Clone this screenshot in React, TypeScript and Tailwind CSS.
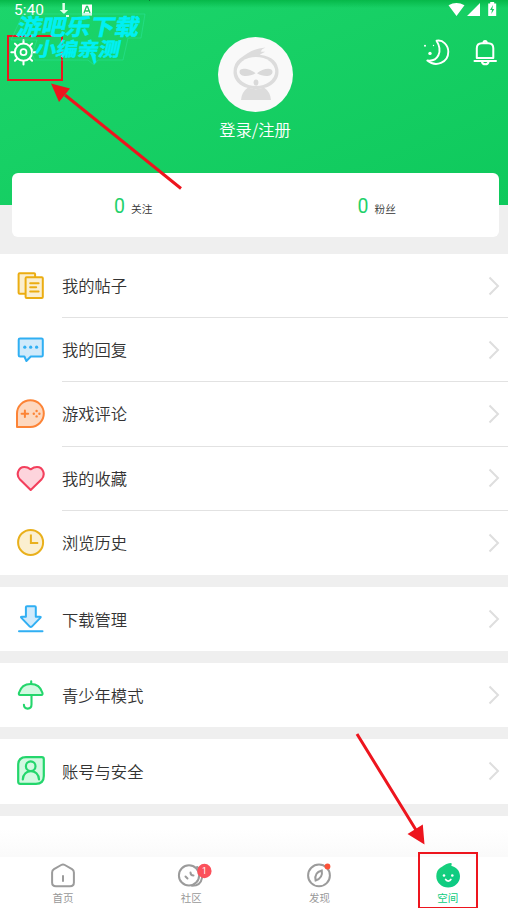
import type { ReactNode } from "react";

const Posts = () => (
  <g stroke="#ebad12" strokeWidth="2" strokeLinejoin="round" strokeLinecap="round" fill="#fbefd0">
    <rect x="2.6" y="2.2" width="16.5" height="20.6" rx="1" />
    <rect x="9.6" y="6.2" width="17.2" height="20.8" rx="1" />
    <path d="M14.2 12.2h8.4M14.2 16.3h6M14.2 20.4h8.4" />
  </g>
);
const Reply = () => (
  <g>
    <path d="M4 3.5h21.5q1.3 0 1.3 1.3v15.4q0 1.3-1.3 1.3H14.8L10.4 26l-2-4.5H4q-1.3 0-1.3-1.3V4.8Q2.7 3.5 4 3.5z" fill="#d0eafb" stroke="#30aff3" strokeWidth="2" strokeLinejoin="round" />
    <g fill="#30aff3"><circle cx="8.8" cy="12.2" r="1.6" /><circle cx="14.7" cy="12.2" r="1.6" /><circle cx="20.6" cy="12.2" r="1.6" /></g>
  </g>
);
const Game = () => (
  <g fill="none" stroke="#fc8436" strokeWidth="2" strokeLinecap="round">
    <path d="M1 28V14.6a13.4 13.4 0 1 1 13.4 13.4z" fill="#fdd8bf" strokeLinejoin="round" />
    <path d="M5.6 14.7h6.6M8.9 11.4V18" />
    <g fill="#fc8436" stroke="none"><circle cx="20.6" cy="12" r="1.2" /><circle cx="20.6" cy="17.4" r="1.2" /><circle cx="17.8" cy="14.7" r="1.2" /><circle cx="23.4" cy="14.7" r="1.2" /></g>
  </g>
);
const Heart = () => (
  <path d="M14.7 26 4 15.6C-.5 10.8 2.2 3 8.4 3c2.8 0 4.2.8 6.3 2.3C16.8 3.8 18.200 3 21 3c6.200 0 8.900 7.800 4.400 12.600z" fill="#fdd4dc" stroke="#f33f5c" strokeWidth="2.1" strokeLinejoin="round" />
);
const Clock = () => (
  <g fill="#fbefd0" stroke="#e9b01c" strokeWidth="2"><circle cx="14.6" cy="14.4" r="12.500" /><path d="M14.900 6.500v8.400h7.300" fill="none" /></g>
);
const Download = () => (
  <g fill="#d0eafb" stroke="#30aff3" strokeWidth="2" strokeLinejoin="round" strokeLinecap="round">
    <path d="M11 2.200h7.800q1 0 1 1V12.700h4q1.600 0 .5 1.200l-8.500 8.700q-1 .9-2 0L5.400 13.900q-1.100-1.200.5-1.200h4V3.200q0-1 1.100-1z" /><path d="M3 27.200h23.500" />
  </g>
);
const Umbrella = () => (
  <g fill="none" stroke="#24d66c" strokeWidth="2.100" strokeLinejoin="round" strokeLinecap="round">
    <path d="M4 15Q2.400 15 3 12.700C4.600 7.500 8.600 4 14.700 4s10.100 3.500 11.700 8.700q.6 2.300-1 2.300z" fill="#d2f9e1" />
    <path d="M15.200 1.200V4M15.500 15v9.500c0 5.300-7.400 5.500-7.600.3" />
  </g>
);
const Account = () => (
  <g fill="#d2f9e1" stroke="#24d66c" strokeWidth="2.200" strokeLinecap="round">
    <path d="M10 1.200h15.800q2 0 2 2V20q0 7.800-7.800 7.800H4.200q-2 0-2-2V9q0-7.800 7.800-7.800z" />
    <circle cx="14.700" cy="10.200" r="4.800" /><path d="M6.800 23.500C7 12.300 22.800 12.300 23 23.500" fill="none" />
  </g>
);

function Row({ icon, label, line = false }: { icon: ReactNode; label: string; line?: boolean }) {
  return (
    <div className="flex h-[64.200px] items-stretch bg-white pl-4">
      <svg className="mr-4 h-[30px] w-[30px] shrink-0 self-center" viewBox="0 0 30 30">{icon}</svg>
      <div className={`flex flex-1 items-center justify-between pr-2 ${line ? "border-b border-[#e2e2e2]" : ""}`}>
        <span className="pb-px text-[16.300px] font-[350] leading-6 text-[#333]">{label}</span>
        <svg className="h-5 w-3" viewBox="0 0 12 20" fill="none" stroke="#dedede" strokeWidth="2"><path d="M1.500 1.500 10 10l-8.500 8.500" /></svg>
      </div>
    </div>
  );
}

function Tab({ label, active = false, children }: { label: string; active?: boolean; children: ReactNode }) {
  return (
    <div className={`flex w-[128.200px] shrink-0 flex-col items-center ${active ? "text-[#0ecb80]" : "text-[#999]"}`}>
      <svg className="mt-[5px] h-7 w-9 overflow-visible" viewBox="0 0 36 28" fill="none" stroke="#9b9b9b" strokeWidth="2" strokeLinecap="round">{children}</svg>
      <span className="text-[10.500px] leading-[16px]">{label}</span>
    </div>
  );
}

export default function App() {
  return (
    <div className="relative flex h-[908px] w-[508px] flex-col overflow-hidden bg-[#efefef] font-['Noto_Sans_CJK_SC',sans-serif]">
      <header className="h-[204.500px] shrink-0 bg-linear-to-br from-[#1cd56b] to-[#0ec95c] text-white">
        <div className="flex h-5 items-center bg-linear-to-b from-[#06b849] to-transparent to-40% pl-[14px] pr-[11px]">
          <span className="w-[44px] font-[Roboto,sans-serif] text-[15.500px] leading-5">5:40</span>
          <svg className="h-5 w-3" viewBox="0 0 12 20" fill="#e2ffe9"><path d="M4.400 3h2.500v7h3.200L6 14 1.700 10h2.700zM8 15h3v2H8z" /></svg>
          <svg className="ml-[11px] mr-auto h-5 w-[12px]" viewBox="0 0 12 20"><path d="M1 4.500h10v11H1z" fill="#fff" /><path d="m3 13 2.500-6.500h1L9 13M4.500 11h3" fill="none" stroke="#18c960" strokeWidth="1.300" /></svg>
          <svg className="h-5 w-[50px]" viewBox="447 0 50 20" fill="white">
            <path d="M448.500 5.200q8-4.400 16 0L456.500 16zM480 3v13h-13zM490.200 2h4v1.500h2V16h-8V3.500h2z" />
            <path d="m493 5-3 5h2l-.7 4 3-5h-2z" fill="#15cc61" />
          </svg>
        </div>
        <div className="flex items-start justify-between pl-[11px] pr-[9px]">
          <svg className="-ml-px mt-[19px] h-[27px] w-[76px]" viewBox="0 0 76 27" fill="none" stroke="white" strokeWidth="2">
            <circle cx="13.500" cy="13.200" r="8.600" /><circle cx="13.500" cy="13.200" r="3" strokeWidth="1.700" />
            <path d="M13.500 1v3M13.500 22.500v3M1.300 13.200h3M22.700 13.200h3M4.900 4.600l2.200 2.200M19.900 19.600l2.200 2.200M4.900 21.800l2.200-2.200M19.900 6.800l2.200-2.200" strokeLinecap="round" />
          </svg>
          <div className="ml-px flex flex-col items-center pt-[17px]">
            <svg className="h-[75px] w-[75px]" viewBox="0 0 75 75">
              <circle cx="37.500" cy="37.500" r="37.500" fill="#f9f9f9" />
              <path d="M22 21.500C29.500 16.500 35 11.500 47.500 10.500Q43.500 12 42.700 14.500q2 .5 4.500.2-3 1.500-5.500 3 18.800 2.500 18.800 17.300c0 10.500-10 17-22.500 17S15.500 45.500 15.500 35q0-9 6.500-13.500z" fill="#dcdcdc" />
              <ellipse cx="38" cy="34.500" rx="19.200" ry="14.500" fill="#f9f9f9" />
              <path d="M37.500 36.300C33 32 21.500 29.500 21.500 34.800c0 5.500 10 5.200 16 1.500zM39 36.300C43.500 32 54.500 29.500 54.500 34.800c0 5.500-9.500 5.200-15.500 1.500z" fill="#d9d9d9" />
              <ellipse cx="38" cy="45.600" rx="2.400" ry="3.100" fill="#d9d9d9" />
              <path d="M23 63Q23.500 55 30 50.500q8 3.500 16 0 6.500 4.500 7 12.500z" fill="#dcdcdc" />
            </svg>
            <span className="mt-[5px] text-[16.300px] font-[350] leading-6">登录/注册</span>
          </div>
          <svg className="mt-[18px] h-[30px] w-[76px]" viewBox="423 38 76 30" fill="none" stroke="white" strokeWidth="2" strokeLinecap="round" strokeLinejoin="round">
            <path d="M436.500 40.800c6.500-1.500 11.800 4.500 11.800 11 0 11-12.500 15.700-21 8.700 10.500 1.500 16-9 9.200-19.700z" strokeWidth="1.900" />
            <g fill="#fff" stroke="none"><circle cx="430" cy="53.400" r="1.700" /><circle cx="425" cy="45.800" r="1" /><circle cx="433.500" cy="45.500" r=".7" /></g>
            <path d="M476.800 58V48.200q0-5 5-5h6.500q5 0 5 5V58zM474.500 61h21.500M482 62c.5 3 6 3 6.500 0M483.500 42.500c0-2 3.200-2 3.200 0" strokeWidth="2" />
          </svg>
        </div>
      </header>

      <section className="relative -mt-[31.500px] ml-3 mr-[9px] flex h-[64px] shrink-0 rounded-[6px] bg-white">
        {["关注", "粉丝"].map((label) => (
          <div key={label} className="flex flex-1 items-baseline justify-center pr-px pt-[20px]">
            <span className="mr-[6px] font-[Roboto,sans-serif] text-[19.500px] leading-7 text-[#1fd16b]">0</span>
            <span className="text-[10.700px] font-[350] text-[#333]">{label}</span>
          </div>
        ))}
      </section>

      <main className="mt-[17px] flex flex-1 flex-col gap-[12px]">
        <div>
          <Row icon={<Posts />} label="我的帖子" line />
          <Row icon={<Reply />} label="我的回复" line />
          <Row icon={<Game />} label="游戏评论" line />
          <Row icon={<Heart />} label="我的收藏" line />
          <Row icon={<Clock />} label="浏览历史" />
        </div>
        <Row icon={<Download />} label="下载管理" />
        <Row icon={<Umbrella />} label="青少年模式" />
        <Row icon={<Account />} label="账号与安全" />
        <div className="flex-1 bg-linear-to-b from-white from-30% to-[#fafafa]" />
      </main>

      <nav className="-ml-px flex h-[51px] w-[513px] shrink-0 bg-white">
        <Tab label="首页"><path d="m16.200 3-7.200 4.200q-1.900 1.200-1.900 3.300v10q0 3.800 3.800 3.800h14.200q3.800 0 3.800-3.800v-10q0-2.100-1.900-3.300L19.800 3q-1.800-1-3.600 0zM18 14v5" /></Tab>
        <Tab label="社区">
          <path d="M24 5c7.500 4 7.500 18.500-5 18.800" /><circle cx="16" cy="13.400" r="10.100" fill="#fff" /><path d="m12.500 14.500 2 2M17.500 10.500c0 2 1 3 3 3" />
          <circle cx="31.400" cy="9" r="7.200" fill="#fb515b" stroke="none" /><text x="31.400" y="12.200" textAnchor="middle" className="font-[Roboto,sans-serif] text-[8.500px]" fill="white" stroke="none">1</text>
        </Tab>
        <Tab label="发现"><circle cx="18" cy="13.400" r="10.900" /><path d="M20.800 8.500c-6 1.500-7 6-6.200 10 4.500-1.500 7.200-4.500 6.200-10z" /><circle cx="26.500" cy="4.500" r="2.900" fill="#fb5138" stroke="none" /></Tab>
        <Tab label="空间" active>
          <defs><linearGradient id="drop" x2="1" y2="1"><stop stopColor="#1bd279" /><stop offset="1" stopColor="#08c886" /></linearGradient></defs>
          <path d="M10.300 5.700C14.300 3.500 14.800 1.700 21 .9q1 .1.700 1.300l-.4 1.500C26.300 5.300 30 8.500 30 14.300 30 21 24.500 25.500 18.200 25.500S6.300 21 6.300 14.300C6.300 10 7.800 7.300 10.300 5.700z" fill="url(#drop)" stroke="none" />
          <g fill="#fff" stroke="none"><circle cx="14" cy="13.500" r="1.300" /><circle cx="22.300" cy="13.500" r="1.300" /></g><path d="M15.600 17.400c1 2.200 4.300 2.200 5.300 0" stroke="#fff" strokeWidth="1.700" />
        </Tab>
      </nav>

      <svg className="pointer-events-none absolute inset-0 h-[908px] w-[508px]" viewBox="0 0 508 908" fill="none">
        <g stroke="#ed151e" strokeWidth="2">
          <rect x="8" y="36" width="54" height="44" /><rect x="419" y="853" width="58" height="55" />
          <path d="M181 188.500 65 95M357 734l59 96" strokeWidth="3" />
        </g>
        <path d="M51 83.500 70 88.500 59 102zM424.500 844.500 407.500 834l15.300-9.500z" fill="#ed151e" />
        <path d="M23 14h122l-4 24h-13l-5 22H98l-4 5-6-5H35l-3-6 5-14H11z" stroke="#2ae49c" strokeWidth=".8" opacity=".65" />
        <g fill="#00f0f4" stroke="#00f0f4" strokeWidth=".5" className="font-['Noto_Sans_CJK_SC',sans-serif] font-bold">
          <text transform="translate(16 34.500) skewX(-12)" fontSize="22.500" textLength="122" lengthAdjust="spacingAndGlyphs">游吧乐下载</text>
          <text transform="translate(34 56.300) skewX(-12)" fontSize="19" textLength="85" lengthAdjust="spacingAndGlyphs">小编亲测</text>
          <path d="m91 54 3 10 2-2-1-8z" />
        </g>
        <path d="M149.500 0v1" stroke="#087d35" />
      </svg>
    </div>
  );
}
